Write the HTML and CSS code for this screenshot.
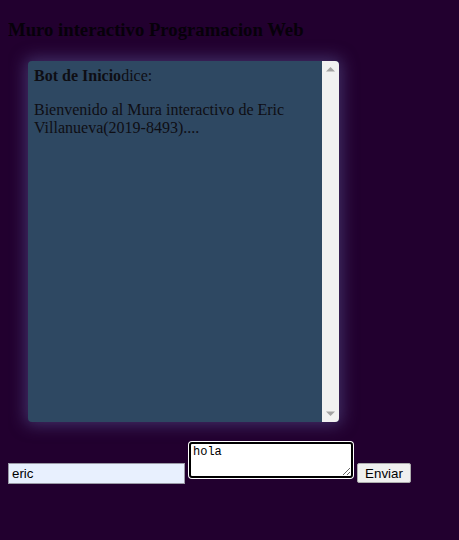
FILE: index.html
```html
<!DOCTYPE html>
<html lang="es">
<head>
<meta charset="utf-8">
<title>Muro interactivo</title>
<link rel="stylesheet" href="styles.css">
</head>
<body>
<h3 class="title">Muro interactivo Programacion Web</h3>
<div class="wall">
  <div class="wall-content">
    <div class="msg"><b>Bot de Inicio</b>dice:<p class="msg-text">Bienvenido al Mura interactivo de Eric Villanueva(2019-8493)....</p></div>
  </div>
  <div class="scrollbar">
    <svg class="arrow" width="17" height="17" viewBox="0 0 17 17"><path d="M4 10.5 L8.5 6 L13 10.5 Z" fill="#a3a3a3"/></svg>
    <svg class="arrow" width="17" height="17" viewBox="0 0 17 17"><path d="M4 6.5 L8.5 11 L13 6.5 Z" fill="#a3a3a3"/></svg>
  </div>
</div>
<form class="form">
  <input class="name" type="text" value="eric"> <textarea class="text">hola</textarea> <button class="send" type="button">Enviar</button>
</form>
</body>
</html>
```
FILE: styles.css
```css
html, body {
  background: #22002f;
}
body {
  margin: 8px;
  font-family: "Liberation Serif", "Times New Roman", serif;
  font-size: 16px;
  color: #000;
}
.title {
  font-size: 18.72px;
  font-weight: bold;
  margin: 10.72px 0 18.72px;
  color: #07000a;
}
.wall {
  box-sizing: border-box;
  display: flex;
  width: 311px;
  height: 361px;
  margin: 20px 0 20px 20px;
  background: #2e4862;
  border-radius: 4px;
  overflow: hidden;
  color: #0e0e14;
  box-shadow: 0 0 16px 3px rgba(95, 95, 160, 0.5);
}
.wall-content {
  flex: 1;
  padding: 6px;
}
.scrollbar {
  width: 17px;
  flex: none;
  background: #f1f1f1;
  display: flex;
  flex-direction: column;
  justify-content: space-between;
}
.arrow {
  display: block;
}
.msg-text {
  margin: 16px 0 0;
}
.form {
  margin: 0;
}
.name {
  box-sizing: border-box;
  width: 177px;
  height: 21px;
  padding: 1px 3px;
  border: 1px solid #9a9aa6;
  background: #e8f0fe;
  font-family: "Liberation Sans", Arial, sans-serif;
  font-size: 13.33px;
  color: #000;
  vertical-align: baseline;
}
.text {
  box-sizing: border-box;
  width: 164px;
  height: 36px;
  padding: 1px 2px;
  border: 2px solid #000;
  border-radius: 3px;
  box-shadow: 0 0 0 1px #fff;
  background: #fff;
  font-family: "Liberation Mono", "Courier New", monospace;
  font-size: 12px;
  color: #000;
  outline: none;
}
.send {
  box-sizing: border-box;
  width: 54px;
  height: 20px;
  padding: 0 6px;
  border: 1px solid #adadad;
  border-radius: 2px;
  background: #efefef;
  font-family: "Liberation Sans", Arial, sans-serif;
  font-size: 13.33px;
  color: #000;
}
```
